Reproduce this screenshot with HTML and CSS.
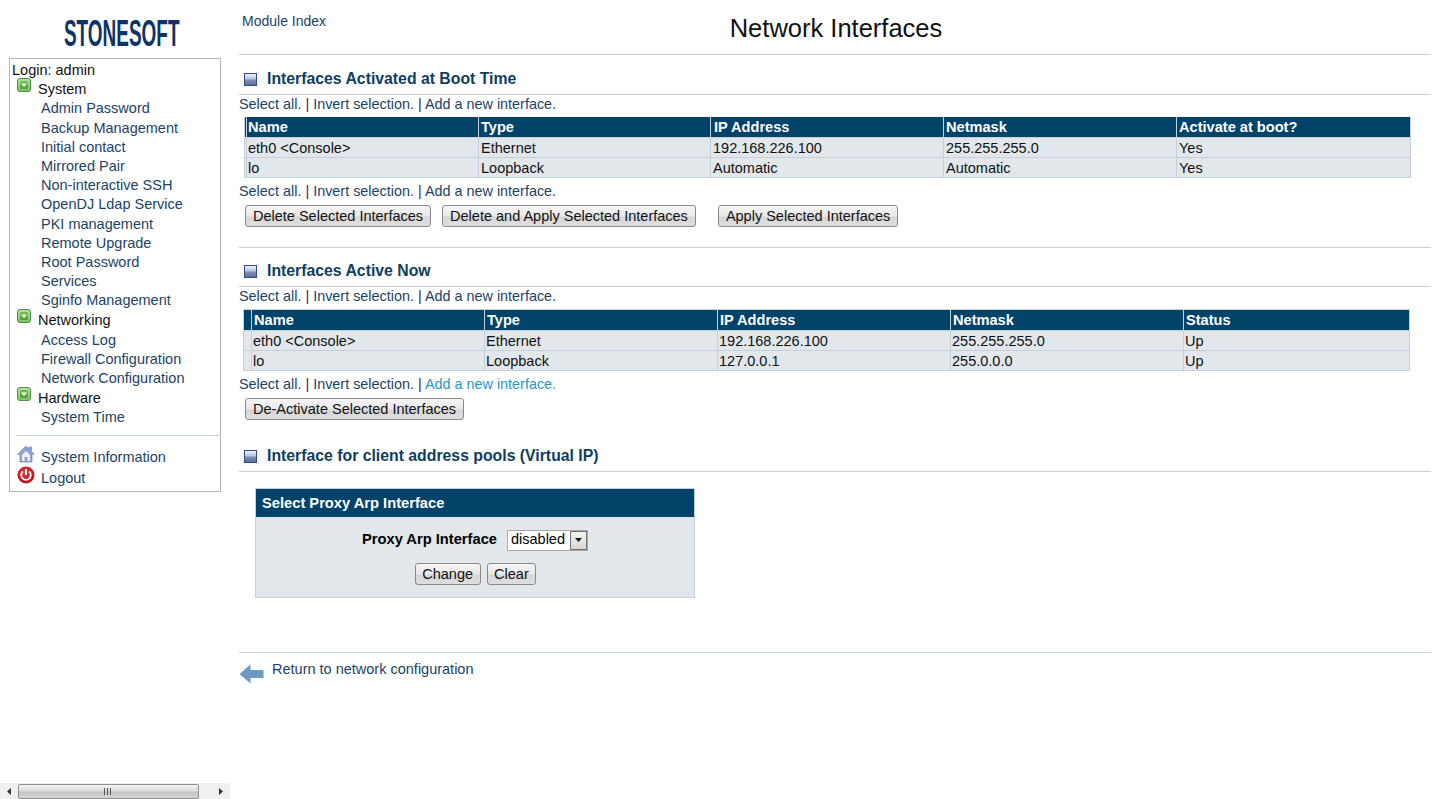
FILE: index.html
```html
<!DOCTYPE html>
<html lang="en">
<head>
<meta charset="utf-8">
<title>Network Interfaces</title>
<link rel="stylesheet" href="styles.css">
</head>
<body>
<svg class="defs" width="0" height="0" aria-hidden="true">
  <defs>
    <linearGradient id="gg" x1="0" y1="0" x2="0" y2="1"><stop offset="0" stop-color="#b9e3a6"/><stop offset="1" stop-color="#7cc263"/></linearGradient>
    <linearGradient id="gi" x1="0" y1="0" x2="0" y2="1"><stop offset="0" stop-color="#6fc04f"/><stop offset="1" stop-color="#4ea336"/></linearGradient>
    <linearGradient id="sq" x1="0" y1="0" x2="0" y2="1"><stop offset="0" stop-color="#f4f6fa"/><stop offset=".45" stop-color="#b6c3dc"/><stop offset=".55" stop-color="#7c8fb8"/><stop offset="1" stop-color="#5a6f9f"/></linearGradient>
    <radialGradient id="rg" cx=".45" cy=".35" r=".75"><stop offset="0" stop-color="#e8383c"/><stop offset="1" stop-color="#b0090f"/></radialGradient>
    <symbol id="open" viewBox="0 0 14 14">
      <rect x=".5" y=".5" width="13" height="13" rx="2.500" fill="url(#gg)" stroke="#4f8a4a"/>
      <rect x="3" y="3" width="8" height="8" rx="1" fill="url(#gi)"/>
      <path d="M4 5.500h6L7 9z" fill="#fff"/>
    </symbol>
    <symbol id="sect" viewBox="0 0 13 13">
      <rect x=".5" y=".5" width="12" height="12" fill="url(#sq)" stroke="#2f4a86"/>
    </symbol>
  </defs>
</svg>
<div class="page">
  <aside class="side">
    <div class="logo"><span class="logo-text">STONESOFT</span></div>
    <nav class="menu">
      <div class="login">Login: admin</div>
      <div class="cat"><svg class="cat-ico" width="14" height="14"><use href="#open"/></svg><span>System</span></div>
      <a class="item">Admin Password</a>
      <a class="item">Backup Management</a>
      <a class="item">Initial contact</a>
      <a class="item">Mirrored Pair</a>
      <a class="item">Non-interactive SSH</a>
      <a class="item">OpenDJ Ldap Service</a>
      <a class="item">PKI management</a>
      <a class="item">Remote Upgrade</a>
      <a class="item">Root Password</a>
      <a class="item">Services</a>
      <a class="item">Sginfo Management</a>
      <div class="cat"><svg class="cat-ico" width="14" height="14"><use href="#open"/></svg><span>Networking</span></div>
      <a class="item">Access Log</a>
      <a class="item">Firewall Configuration</a>
      <a class="item">Network Configuration</a>
      <div class="cat"><svg class="cat-ico" width="14" height="14"><use href="#open"/></svg><span>Hardware</span></div>
      <a class="item">System Time</a>
      <hr class="menu-rule">
      <a class="foot-item first">
        <svg class="foot-ico" width="18" height="18" viewBox="0 0 18 18"><path d="M9 1 .8 9.200H3V17h12V9.200h2.200L14.500 6.500V2H12v2z" fill="#8fa4d4" stroke="#6f84b8" stroke-width=".7"/><path d="M5 10 9 6l4 4v6h-2.500v-4h-3v4H5z" fill="#eef2fa"/></svg>
        <span>System Information</span>
      </a>
      <a class="foot-item">
        <svg class="foot-ico" width="18" height="18" viewBox="0 0 18 18"><circle cx="9" cy="9" r="8.500" fill="url(#rg)"/><path d="M5.800 5.500a4.800 4.800 0 1 0 6.400 0" fill="none" stroke="#fff" stroke-width="1.800"/><path d="M9 3v6" stroke="#fff" stroke-width="2"/></svg>
        <span>Logout</span>
      </a>
    </nav>
    <div class="hscroll">
      <span class="hs-btn"><svg width="4" height="7"><path d="M4 0v7L0 3.500z" fill="#333"/></svg></span>
      <span class="hs-thumb"><svg width="9" height="7"><path d="M.5 0v7M3.500 0v7M6.500 0v7" stroke="#555"/></svg></span>
      <span class="hs-btn"><svg width="4" height="7"><path d="M0 0v7l4-3.500z" fill="#333"/></svg></span>
    </div>
  </aside>

  <main class="main">
    <header class="top">
      <a class="mod">Module Index</a>
      <h1 class="title">Network Interfaces</h1>
    </header>

    <section class="boot">
      <h2 class="sect"><svg class="sect-ico" width="13" height="13"><use href="#sect"/></svg>Interfaces Activated at Boot Time</h2>
      <p class="links"><a>Select all.</a> <i>|</i> <a>Invert selection.</a> <i>|</i> <a>Add a new interface.</a></p>
      <table class="grid t1">
        <thead><tr><th class="c0"></th><th>Name</th><th>Type</th><th>IP Address</th><th>Netmask</th><th>Activate at boot?</th></tr></thead>
        <tbody>
          <tr><td class="c0"></td><td>eth0 &lt;Console&gt;</td><td>Ethernet</td><td>192.168.226.100</td><td>255.255.255.0</td><td>Yes</td></tr>
          <tr><td class="c0"></td><td>lo</td><td>Loopback</td><td>Automatic</td><td>Automatic</td><td>Yes</td></tr>
        </tbody>
      </table>
      <p class="links after"><a>Select all.</a> <i>|</i> <a>Invert selection.</a> <i>|</i> <a>Add a new interface.</a></p>
      <div class="btns">
        <button class="btn">Delete Selected Interfaces</button>
        <button class="btn gap11">Delete and Apply Selected Interfaces</button>
        <button class="btn gap22">Apply Selected Interfaces</button>
      </div>
    </section>

    <section class="now">
      <h2 class="sect"><svg class="sect-ico" width="13" height="13"><use href="#sect"/></svg>Interfaces Active Now</h2>
      <p class="links"><a>Select all.</a> <i>|</i> <a>Invert selection.</a> <i>|</i> <a>Add a new interface.</a></p>
      <table class="grid t2">
        <thead><tr><th class="c0"></th><th>Name</th><th>Type</th><th>IP Address</th><th>Netmask</th><th>Status</th></tr></thead>
        <tbody>
          <tr><td class="c0"></td><td>eth0 &lt;Console&gt;</td><td>Ethernet</td><td>192.168.226.100</td><td>255.255.255.0</td><td>Up</td></tr>
          <tr><td class="c0"></td><td>lo</td><td>Loopback</td><td>127.0.0.1</td><td>255.0.0.0</td><td>Up</td></tr>
        </tbody>
      </table>
      <p class="links after"><a>Select all.</a> <i>|</i> <a>Invert selection.</a> <i>|</i> <a class="hover">Add a new interface.</a></p>
      <div class="btns"><button class="btn">De-Activate Selected Interfaces</button></div>
    </section>

    <section class="pools">
      <h2 class="sect"><svg class="sect-ico" width="13" height="13"><use href="#sect"/></svg>Interface for client address pools (Virtual IP)</h2>
      <form class="proxy">
        <div class="proxy-head">Select Proxy Arp Interface</div>
        <div class="proxy-row">
          <b>Proxy Arp Interface</b>
          <span class="select"><span class="sel-val">disabled</span><span class="sel-arrow"><svg width="7" height="4"><path d="M0 0h7L3.500 4z" fill="#111"/></svg></span></span>
        </div>
        <div class="proxy-btns"><button type="button" class="btn small">Change</button><button type="button" class="btn small">Clear</button></div>
      </form>
    </section>

    <footer class="ret">
      <svg class="ret-ico" width="25" height="20" viewBox="0 0 25 20"><path d="M.5 10 11.500.5v5.500H24.500v8H11.500v5.500z" fill="#6a9ac4"/></svg>
      <a>Return to network configuration</a>
    </footer>
  </main>
</div>
</body>
</html>
```
FILE: styles.css
```css
* { box-sizing: border-box; }
html, body { margin: 0; height: 799px; overflow: hidden; background: #fff; }
body { font: 14.5px/19.2px "Liberation Sans", Arial, sans-serif; color: #000; }
.defs { position: absolute; }
a { color: #1d4363; text-decoration: none; }

.page { display: flex; height: 799px; }

.side { width: 230px; flex: none; display: flex; flex-direction: column; height: 799px; }
.logo { flex: none; height: 50px; margin: 0 0 8px 9px; width: 212px; padding: 18px 0 0 13px; display: flex; justify-content: center; white-space: nowrap; }
.logo-text { flex: none; font: bold 37px/32px "Liberation Sans", Arial, sans-serif; color: #0e3367; transform: scaleX(.513); transform-origin: center; }
.menu { width: 212px; margin-left: 9px; height: 434px; border: 1px solid #b5b5b5; display: flex; flex-direction: column; padding-top: 2px; }
.login { padding-left: 2px; color: #111; height: 19.700px; }
.cat { display: flex; align-items: flex-start; color: #111; height: 20px; padding-left: 7px; }
.item + .cat { margin-top: .8px; }
.cat-ico { margin-top: -2px; margin-right: 7px; flex: none; }
.item { display: block; padding-left: 31px; height: 19.250px; }
.menu-rule { border: 0; border-top: 1px solid #c5d0da; margin: 8px -1px 0 6px; height: 0; }
.foot-item { display: flex; align-items: flex-start; padding-left: 7px; height: 22.500px; }
.foot-item.first { margin-top: 11.500px; }
.foot-ico { margin-top: -3px; margin-right: 6px; flex: none; }
.hscroll { margin-top: auto; height: 16px; background: #f0f0f0; display: flex; align-items: center; }
.hs-btn { width: 18px; flex: none; display: flex; justify-content: center; }
.hs-thumb { flex: none; width: 181px; height: 15px; border: 1px solid #8e8f8f; border-radius: 2px; background: linear-gradient(#f3f3f3, #dcdcdc 45%, #c4c4c4 55%, #d4d4d4); display: flex; align-items: center; justify-content: center; margin-right: 13px; }

.main { width: 1192px; margin-left: 9px; flex: none; }
.top { height: 55px; border-bottom: 1px solid #c5d0da; display: grid; grid-template-columns: 1fr auto 1fr; }
.mod { padding: 12px 0 0 3px; font-size: 14px; }
.title { grid-column: 2; margin: 12px 0 0; text-align: center; font-size: 25.500px; line-height: 32px; font-weight: normal; color: #111; padding-left: 2px; }

.sect { margin: 0; font-size: 15.800px; line-height: 20px; font-weight: bold; color: #0f3d60; display: flex; align-items: center; height: 30px; padding: 0 0 1px 5px; border-bottom: 1px solid #c5d0da; }
.sect-ico { margin-right: 10px; flex: none; }
.boot { padding-top: 10px; height: 193px; border-bottom: 1px solid #c5d0da; }
.now { padding-top: 9px; height: 178px; }
.pools { padding-top: 16px; }

.links { margin: 0; height: 19.2px; color: #222; font-size: 14.400px; }
.links i { font-style: normal; color: #3d2466; }
.links a.hover { color: #1d9ac6; }
.links.after { margin-top: 4px; }

.grid { border-collapse: separate; border-spacing: 0; table-layout: fixed; width: 1167px; margin: 3px 0 0 5px; background: #e1e7eb; border-bottom: 1px solid #c5d0da; border-right: 1px solid #c5d0da; font-size: 14.5px; }
.t2 { margin: 3px 0 0 4px; border-top: 1px solid #c5d0da; }
.grid th { background: #024369; color: #fff; text-align: left; font-weight: bold; font-size: 14.600px; line-height: 20px; height: 20px; padding: 0 0 0 2px; border-left: 1px solid #c5d0da; }
.grid td { height: 20px; line-height: 18px; padding: 1px 0 0 2px; border-left: 1px solid #c5d0da; border-top: 1px solid #c5d0da; color: #111; }
.grid th:first-child, .grid td:first-child { padding: 0; }
.t1 td:nth-child(2), .t1 th:nth-child(2) { padding-left: 1px; }
.t1 th:nth-child(4) { padding-left: 3px; }
.t2 td { padding-left: 1px; }
.t1 .c0 { width: 2px; }
.t2 .c0 { width: 8px; }
.t1 th:nth-child(2) { width: 232px; }
.t1 th:nth-child(3) { width: 232px; }
.t1 th:nth-child(4) { width: 233px; }
.t1 th:nth-child(5) { width: 233px; }
.t2 th:nth-child(2) { width: 233px; }
.t2 th:nth-child(3) { width: 233px; }
.t2 th:nth-child(4) { width: 233px; }
.t2 th:nth-child(5) { width: 233px; }

.btns { display: flex; margin: 4px 0 0 6px; }
.btn { font: 14.5px/18px "Liberation Sans", Arial, sans-serif; color: #111; height: 22px; padding: 0 7px; border: 1px solid #8a8a8a; border-radius: 3px; background: linear-gradient(#f5f5f5, #e8e8e8 50%, #d6d6d6 55%, #dedede); white-space: nowrap; }
.btn.small { padding: 0 6.500px; }
.gap11 { margin-left: 11px; }
.gap22 { margin-left: 22px; }

.proxy { width: 440px; height: 110px; margin: 16px 0 0 16px; background: #e1e7eb; border: 1px solid #c5d0da; display: block; }
.proxy-head { height: 28px; background: #024369; color: #fff; font-weight: bold; font-size: 14.700px; line-height: 28px; padding-left: 6px; }
.proxy-row { display: flex; justify-content: center; align-items: center; gap: 10px; margin-top: 12px; height: 22px; }
.proxy-row b { font-size: 14.700px; }
.select { display: flex; align-items: center; width: 81px; height: 21px; background: #fff; border: 1px solid #a9a9a9; padding: 0 0 0 3px; justify-content: space-between; }
.sel-arrow { width: 17px; height: 19px; border: 1px solid #707070; background: linear-gradient(#f4f4f4, #d6d6d6); display: flex; align-items: center; justify-content: center; }
.proxy-btns { display: flex; justify-content: center; gap: 6px; margin-top: 12px; padding-left: 1px; }

.ret { position: relative; margin-top: 54px; border-top: 1px solid #c5d0da; padding: 7px 0 0 33px; }
.ret-ico { position: absolute; left: 0; top: 11px; }
```
